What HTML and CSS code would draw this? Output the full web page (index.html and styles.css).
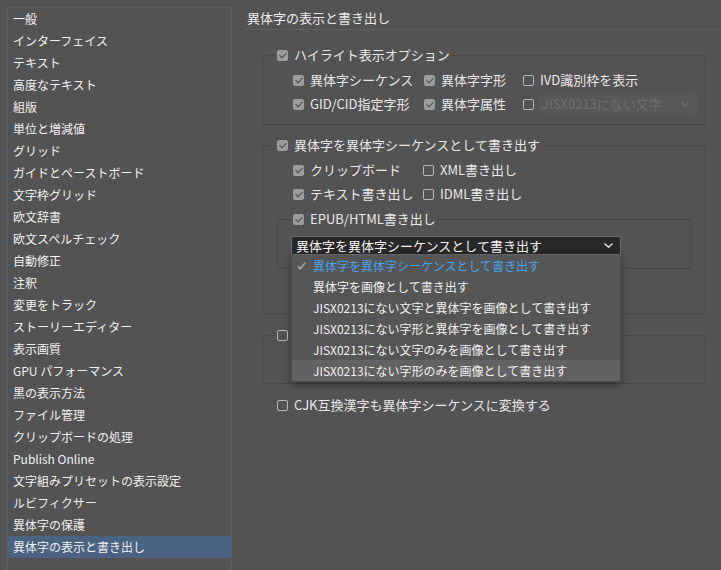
FILE: index.html
```html
<!DOCTYPE html>
<html lang="ja">
<head>
<meta charset="utf-8">
<title>環境設定</title>
<link rel="stylesheet" href="styles.css">
</head>
<body>
<div class="app">
  <nav class="sidebar">
    <ul class="nav">
      <li>一般</li>
      <li>インターフェイス</li>
      <li>テキスト</li>
      <li>高度なテキスト</li>
      <li>組版</li>
      <li>単位と増減値</li>
      <li>グリッド</li>
      <li>ガイドとペーストボード</li>
      <li>文字枠グリッド</li>
      <li>欧文辞書</li>
      <li>欧文スペルチェック</li>
      <li>自動修正</li>
      <li>注釈</li>
      <li>変更をトラック</li>
      <li>ストーリーエディター</li>
      <li>表示画質</li>
      <li>GPU パフォーマンス</li>
      <li>黒の表示方法</li>
      <li>ファイル管理</li>
      <li>クリップボードの処理</li>
      <li>Publish Online</li>
      <li>文字組みプリセットの表示設定</li>
      <li>ルビフィクサー</li>
      <li>異体字の保護</li>
      <li class="active">異体字の表示と書き出し</li>
    </ul>
  </nav>

  <main class="panel">
    <h1 class="title">異体字の表示と書き出し</h1>

    <fieldset class="group g1">
      <legend class="legend"><span class="cb on"></span>ハイライト表示オプション</legend>
      <div class="grid grid3">
        <label class="opt"><span class="cb on"></span>異体字シーケンス</label>
        <label class="opt"><span class="cb on"></span>異体字字形</label>
        <label class="opt"><span class="cb"></span>IVD識別枠を表示</label>
        <label class="opt"><span class="cb on"></span>GID/CID指定字形</label>
        <label class="opt"><span class="cb on"></span>異体字属性</label>
        <div class="opt tight"><span class="cb"></span>
          <div class="select disabled"><span>JISX0213にない文字</span><svg class="chev" width="8" height="5" viewBox="0 0 8 5"><path d="M0.5 0.5 L4 4 L7.5 0.5" fill="none" stroke="currentColor" stroke-width="1.1"/></svg></div>
        </div>
      </div>
    </fieldset>

    <fieldset class="group g2">
      <legend class="legend"><span class="cb on"></span>異体字を異体字シーケンスとして書き出す</legend>
      <div class="grid grid2">
        <label class="opt"><span class="cb on"></span>クリップボード</label>
        <label class="opt"><span class="cb"></span>XML書き出し</label>
        <label class="opt"><span class="cb on"></span>テキスト書き出し</label>
        <label class="opt"><span class="cb"></span>IDML書き出し</label>
      </div>
      <fieldset class="group inner">
        <legend class="legend"><span class="cb on"></span>EPUB/HTML書き出し</legend>
        <div class="combo">
          <div class="select dark"><span>異体字を異体字シーケンスとして書き出す</span><svg class="chev" width="9" height="5" viewBox="0 0 9 5"><path d="M0.5 0.5 L4.5 4.3 L8.5 0.5" fill="none" stroke="currentColor" stroke-width="1.2"/></svg></div>
          <ul class="menu">
            <li class="checked"><svg class="tick" width="9" height="8" viewBox="0 0 9 8"><path d="M0.8 4.2 L3.3 6.8 L8.2 0.8" fill="none" stroke="currentColor" stroke-width="1.6"/></svg>異体字を異体字シーケンスとして書き出す</li>
            <li>異体字を画像として書き出す</li>
            <li>JISX0213にない文字と異体字を画像として書き出す</li>
            <li>JISX0213にない字形と異体字を画像として書き出す</li>
            <li>JISX0213にない文字のみを画像として書き出す</li>
            <li class="hover">JISX0213にない字形のみを画像として書き出す</li>
          </ul>
        </div>
      </fieldset>
    </fieldset>

    <fieldset class="group g3">
      <legend class="legend"><span class="cb"></span></legend>
    </fieldset>

    <label class="opt single"><span class="cb"></span>CJK互換漢字も異体字シーケンスに変換する</label>
  </main>
</div>
</body>
</html>
```

FILE: styles.css
```css
* { box-sizing: border-box; }

html, body {
  margin: 0;
  padding: 0;
  height: 100%;
  overflow: hidden;
  background: #535353;
}

body {
  font-family: "Noto Sans CJK JP", "Noto Sans", sans-serif;
  color: #e8e8e8;
  font-size: 13px;
}

.app {
  display: flex;
  align-items: stretch;
  height: 100%;
}

/* Sidebar */
.sidebar {
  margin: 7px 0 0 7px;
  width: 225px;
  border: 1px solid #606060;
  border-bottom: none;
  flex: none;
}

.nav {
  list-style: none;
  margin: 0;
  padding: 0;
}

.nav li {
  height: 22px;
  line-height: 22px;
  padding-left: 5px;
  font-size: 12px;
  color: #f0f0f0;
  white-space: nowrap;
}

.nav li.active {
  background: #4a6381;
}

/* Main panel */
.panel {
  flex: 1;
  margin-left: 13px;
  min-width: 0;
}

.title {
  margin: 0;
  font-size: 13px;
  font-weight: normal;
  line-height: 18px;
  padding: 9px 0 2px 2px;
  border-bottom: 1px solid #5f5f5f;
  color: #ececec;
}

/* Group boxes */
.group {
  margin: 0 15px 0 17px;
  padding: 4px 0 8px 12px;
  border: 1px solid #464646;
  border-radius: 3px;
  min-width: 0;
}

.legend {
  padding: 0 2px;
  height: 18px;
  line-height: 18px;
  display: flex;
  align-items: center;
  gap: 6px;
  white-space: nowrap;
}

.g1 { margin-top: 16px; }
.g2 { margin-top: 11px; padding-bottom: 44px; }
.g3 { margin-top: 12px; padding: 0 0 39px 12px; }

.inner {
  margin: 4px 13px 0 2px;
  padding: 8px 0 13px 13px;
}

.grid {
  display: grid;
  grid-auto-rows: 24px;
  padding-left: 18px;
}

.grid3 { grid-template-columns: 131px 99px 1fr; }
.grid2 { grid-template-columns: 130px 1fr; }

.opt {
  display: flex;
  align-items: center;
  gap: 6px;
  white-space: nowrap;
  line-height: 18px;
}

.opt.tight { gap: 5px; }

.single {
  margin: 9px 0 0 32px;
  height: 24px;
}

/* Checkbox */
.cb {
  position: relative;
  flex: none;
  width: 11px;
  height: 11px;
  border: 1px solid #b9b9b9;
  border-radius: 2px;
  background: transparent;
}

.cb.on {
  border-color: #9c9c9c;
  background: #9c9c9c;
}

.cb.on::after {
  content: "";
  position: absolute;
  left: 3px;
  top: 0px;
  width: 3px;
  height: 6px;
  border-right: 1.6px solid #4c4c4c;
  border-bottom: 1.6px solid #4c4c4c;
  transform: rotate(45deg);
}

/* Selects */
.select {
  display: flex;
  align-items: center;
  justify-content: space-between;
  white-space: nowrap;
}

.select.disabled {
  width: 158px;
  height: 20px;
  padding: 0 8px 0 3px;
  background: #585858;
  border-radius: 3px;
  color: #707070;
}

.select.dark {
  width: 330px;
  height: 19px;
  padding: 0 7px 0 4px;
  background: #282828;
  border: 1px solid #6a6a6a;
  border-radius: 2px;
  color: #f2f2f2;
  line-height: 17px;
}

.chev { flex: none; }

.combo {
  position: relative;
  width: 330px;
}

/* Dropdown menu (overlay) */
.menu {
  position: absolute;
  left: 0;
  top: 100%;
  width: 330px;
  margin: 0;
  padding: 0;
  list-style: none;
  background: #565656;
  border: 1px solid #4a4a4a;
  border-top: none;
  box-shadow: 0 3px 8px rgba(0, 0, 0, 0.35);
  z-index: 5;
}

.menu li {
  position: relative;
  height: 21px;
  line-height: 21px;
  padding-left: 21px;
  font-size: 12px;
  color: #f0f0f0;
  white-space: nowrap;
}

.menu li.checked { color: #47a3ee; }

.menu li.hover { background: #626262; }

.tick {
  position: absolute;
  left: 5px;
  top: 7px;
  color: #a8a8a8;
}
```
